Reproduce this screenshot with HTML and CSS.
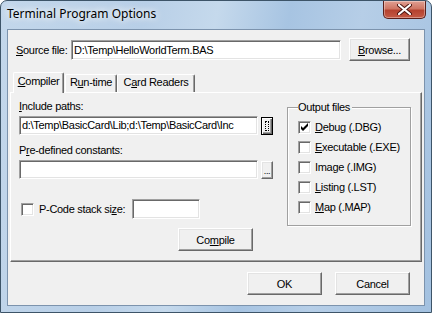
FILE: index.html
```html
<!DOCTYPE html>
<html>
<head>
<meta charset="utf-8" />
<title>Terminal Program Options</title>
<link rel="stylesheet" href="styles.css">
</head>
<body>

<div class="window">
  <div class="titlebar">
    <span class="title">Terminal Program Options</span>
    <span class="close">
      <svg width="15" height="11" viewBox="0 0 15 11"><path d="M2 1 L13 10 M13 1 L2 10" stroke="#4a1410" stroke-width="4" stroke-linecap="round"/><path d="M2 1 L13 10 M13 1 L2 10" stroke="#fff" stroke-width="2.2" stroke-linecap="round"/></svg>
    </span>
  </div>

  <div class="client">
    <!-- fichier source -->
    <div class="source-row">
      <span class="source-lbl"><u>S</u>ource file:</span>
      <div class="edit source-edit">D:\Temp\HelloWorldTerm.BAS</div>
      <span class="btn browse"><u>B</u>rowse...</span>
    </div>

    <!-- onglets -->
    <div class="tabs">
      <div class="tab active tab-compiler"><u>C</u>ompiler</div>
      <div class="tab tab-runtime">R<u>u</u>n-time</div>
      <div class="tab tab-readers">C<u>a</u>rd Readers</div>
    </div>

    <div class="panel">
      <div class="left">
        <div class="lbl"><u>I</u>nclude paths:</div>
        <div class="edit-row">
          <div class="edit path-edit">d:\Temp\BasicCard\Lib;d:\Temp\BasicCard\Inc</div>
          <span class="btn dots focus"><span class="focus-rect"></span></span>
        </div>
        <div class="lbl lbl-gap">P<u>r</u>e-defined constants:</div>
        <div class="edit-row">
          <div class="edit path-edit"></div>
          <span class="btn dots"><span class="dot-txt">...</span></span>
        </div>
        <div class="pcode-row">
          <span class="box"></span>
          <span class="pcode-lbl">P-Code stack si<u>z</u>e:</span>
          <div class="edit pcode-edit"></div>
        </div>
        <span class="btn compile">Co<u>m</u>pile</span>
      </div>

      <fieldset class="group">
        <legend>Output files</legend>
        <div class="check"><span class="box"><svg width="11" height="11" viewBox="0 0 11 11"><polygon points="2,4 4,6 9,1 9,4 4,9 2,7" fill="#000"/></svg></span><span><u>D</u>ebug (.DBG)</span></div>
        <div class="check"><span class="box"></span><span><u>E</u>xecutable (.EXE)</span></div>
        <div class="check"><span class="box"></span><span>Image (.IMG)</span></div>
        <div class="check"><span class="box"></span><span><u>L</u>isting (.LST)</span></div>
        <div class="check"><span class="box"></span><span><u>M</u>ap (.MAP)</span></div>
      </fieldset>
    </div>

    <div class="footer">
      <span class="btn action">OK</span>
      <span class="btn action">Cancel</span>
    </div>
  </div>
</div>

</body>
</html>
```

FILE: styles.css
```css
* { box-sizing : border-box; }

body {
	margin : 0;
	font-family : "Liberation Sans", Arial, sans-serif;
	font-size : 11px;
	letter-spacing : -0.3px;
	color : #000;
	background : #fff;
}
u { text-underline-offset : 1px; }

/* cadre de la fenêtre (style Vista) */
.window {
	width : 432px;
	height : 313px;
	border : 1px solid #3d5468;
	border-radius : 7px 7px 0 0;
	padding : 0 6px 6px;
	display : flex;
	flex-direction : column;
	background : linear-gradient(100deg, #c3d7eb 0%, #b8cfe7 30%, #c5d9ec 45%, #a7c4e2 60%, #b6cee7 75%, #a3c1e0 100%);
	overflow : hidden;
	white-space : nowrap;
}
.titlebar {
	height : 28px;
	display : flex;
	align-items : center;
	position : relative;
}
.title {
	font-family : "Noto Sans", "DejaVu Sans", sans-serif;
	font-size : 12px;
	letter-spacing : 0;
	margin-top : -3px;
	text-shadow : 0 0 6px #fff, 0 0 10px #fff;
}
.close {
	position : absolute;
	right : -1px;
	top : 0;
	width : 43px;
	height : 18px;
	border : 1px solid #5a1f1a;
	border-top : 0;
	border-radius : 0 0 5px 5px;
	background : linear-gradient(#e0a093 0%, #cf7664 45%, #b5422f 55%, #c45a45 100%);
	box-shadow : inset 0 0 0 1px rgba(255,255,255,0.35);
	display : flex;
	align-items : center;
	justify-content : center;
}

/* zone cliente */
.client {
	flex : 1;
	background : #f0f0f0;
	border : 1px solid #7c93ad;
	display : flex;
	flex-direction : column;
}

/* boutons et zones de saisie "classiques" */
.btn {
	display : flex;
	align-items : center;
	justify-content : center;
	background : #f0f0f0;
	border : 1px solid;
	border-color : #fff #696969 #696969 #fff;
	box-shadow : inset -1px -1px #a0a0a0, inset 1px 1px #e3e3e3;
}
.edit {
	height : 19px;
	background : #fff;
	border : 1px solid;
	border-color : #a0a0a0 #fff #fff #a0a0a0;
	box-shadow : inset 1px 1px #696969, inset -1px -1px #e3e3e3;
	padding : 0 2px;
	line-height : 17px;
	overflow : hidden;
}

.source-row {
	display : flex;
	align-items : center;
	margin-top : 8px;
	padding-left : 8px;
	height : 23px;
}
.source-lbl { width : 55px; }
.source-edit { width : 270px; height : 20px; line-height : 18px; }
.browse { width : 61px; height : 23px; margin-left : 8px; }

/* onglets */
.tabs {
	display : flex;
	align-items : flex-end;
	margin-top : 11px;
	padding-left : 5px;
	height : 20px;
}
.tab {
	height : 18px;
	text-align : center;
	line-height : 15px;
	background : #f0f0f0;
	border : 1px solid;
	border-bottom : 0;
	border-color : #fff #696969 #696969 #fff;
	border-radius : 2px 2px 0 0;
	box-shadow : inset -1px 0 #a0a0a0;
}
.tab.active {
	height : 21px;
	margin-bottom : -1px;
	position : relative;
	z-index : 1;
	line-height : 17px;
}
.tab-compiler { width : 51px; margin-right : 1px; }
.tab-runtime { width : 52px; }
.tab-readers { width : 78px; }

.panel {
	margin : 0 2px;
	height : 170px;
	border : 1px solid;
	border-color : #fff #696969 #696969 #fff;
	box-shadow : inset -1px -1px #a0a0a0;
	padding : 7px 0 0 8px;
	display : flex;
	align-items : flex-start;
}
.left {
	width : 254px;
	display : flex;
	flex-direction : column;
}
.lbl { line-height : 13px; height : 13px; }
.lbl-gap { margin-top : 9px; }
.edit-row {
	display : flex;
	align-items : center;
	margin-top : 3px;
}
.path-edit { width : 240px; }
.dots {
	width : 12px;
	height : 18px;
	margin-left : 3px;
	align-items : flex-end;
}
.dot-txt { font-size : 9px; line-height : 9px; padding-bottom : 2px; }
.dots.focus {
	border : 1px solid #000;
	box-shadow : inset 1px 1px #fff, inset -1px -1px #696969, inset -2px -2px #a0a0a0;
	align-items : stretch;
	padding : 3px;
}
.focus-rect {
	flex : 1;
	border : 1px dotted #000;
}

.pcode-row {
	display : flex;
	align-items : center;
	margin-top : 20px;
	height : 20px;
	padding-left : 2px;
}
.pcode-lbl { width : 93px; margin-left : 5px; }
.pcode-edit { width : 68px; height : 20px; }
.compile {
	width : 75px;
	height : 23px;
	margin : 9px 0 0 159px;
}

/* cases à cocher */
.box {
	width : 13px;
	height : 13px;
	flex : none;
	background : #fff;
	border : 1px solid;
	border-color : #a0a0a0 #fff #fff #a0a0a0;
	box-shadow : inset 1px 1px #696969, inset -1px -1px #e3e3e3;
	display : flex;
	align-items : center;
	justify-content : center;
}

fieldset.group {
	width : 124px;
	margin : 1px 0 0 14px;
	padding : 3px 0 8px 10px;
	border : 1px solid #a0a0a0;
	box-shadow : inset 1px 1px #fff, 1px 1px #fff;
	border-radius : 0;
}
.group legend {
	padding : 0 2px 0 0;
	line-height : 13px;
	background : #f0f0f0;
}
.check {
	display : flex;
	align-items : center;
	height : 20px;
	gap : 4px;
}

.footer {
	display : flex;
	justify-content : flex-end;
	gap : 13px;
	margin-top : 10px;
	padding-right : 14px;
}
.action { width : 75px; height : 23px; }
```
